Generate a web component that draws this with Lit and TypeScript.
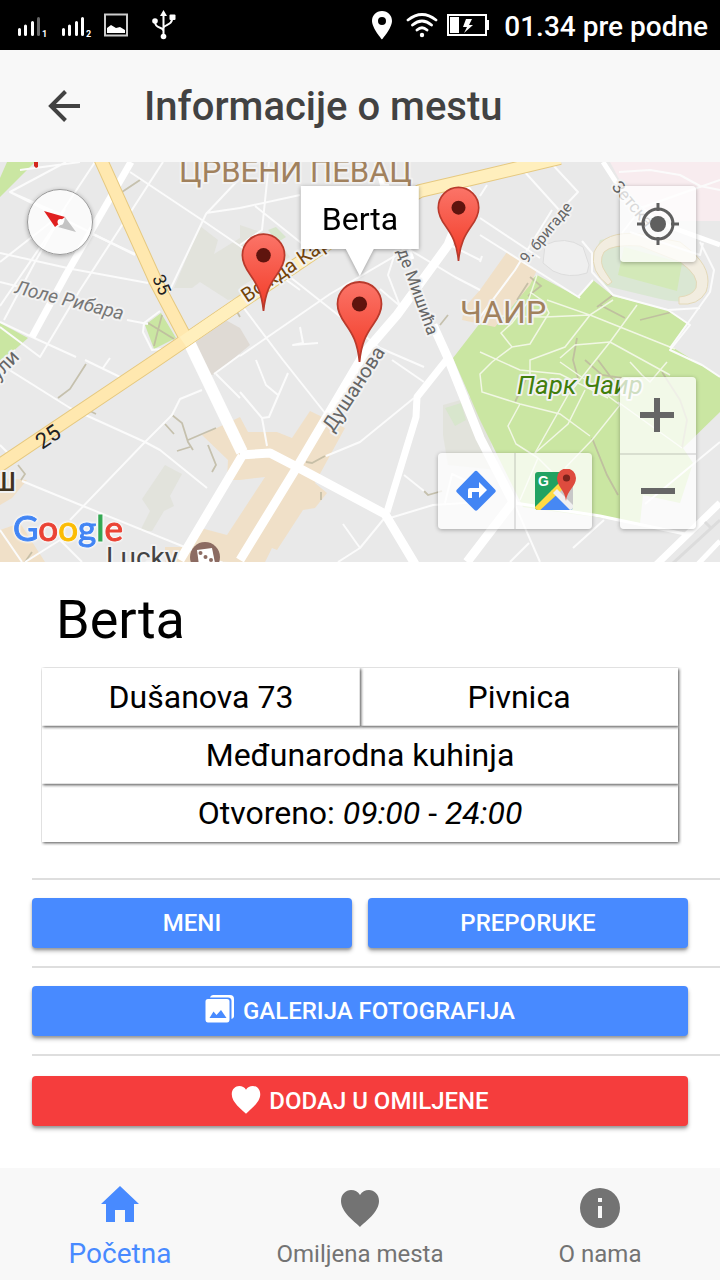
import { LitElement, html, css, svg } from "lit";
import { customElement, property } from "lit/decorators.js";

@customElement("status-bar")
class StatusBar extends LitElement {
  static styles = css`
    :host {
      display: flex;
      align-items: center;
      justify-content: space-between;
      height: 50px;
      padding: 0 12px 0 16px;
      background: #000;
      color: #fff;
      font: 500 28px/32px Roboto, sans-serif;
    }
    .group {
      display: flex;
      align-items: center;
      gap: 14px;
    }
    svg {
      display: block;
    }
    .clock {
      padding-top: 4px;
    }
  `;

  render() {
    return html`
      <div class="group">
        <svg width="162" height="34" viewBox="16 8 162 34" fill="#fff">
          <g stroke="#fff" stroke-width="3" stroke-linecap="round">
            <path d="M19.5 29.500v5M25.500 26v8.500M32.500 22.500v12M63.500 29.500v5M69.500 26v8.500M76.500 22.500v12M82.500 18.500v16" />
            <path stroke="#666" d="M38.500 18.500v16" />
          </g>
          <text x="42" y="37" font-size="9" font-weight="700">1</text>
          <text x="86" y="37" font-size="9" font-weight="700">2</text>
          <path fill="none" stroke="#ccc" stroke-width="2" d="M105 14.500h22v21h-22z" />
          <path d="M107 33v-5l4-3 5 3 4-1 5 3v3z" />
          <g fill="none" stroke="#fff" stroke-width="2">
            <path d="M163.500 14v22M155 21c0 9 8 5 8.500 10M172 17c1 9-8 7-8.500 11" />
          </g>
          <path d="M160 16l3.500-6 3.500 6z" />
          <circle cx="155" cy="21" r="2.800" />
          <rect x="169.500" y="14.500" width="6" height="5.500" rx="1" />
          <circle cx="163.500" cy="36.500" r="2.800" />
        </svg>
      </div>
      <div class="group">
        <svg width="120" height="34" viewBox="370 8 120 34" fill="#fff">
          <path fill-rule="evenodd" d="M382 11c-6 0-10 4.500-10 10 0 7 10 18.500 10 18.500S392 28 392 21c0-5.500-4-10-10-10zm0 6a4 4 0 110 8 4 4 0 010-8z" />
          <g fill="none" stroke="#fff" stroke-width="2.800" stroke-linecap="round">
            <path d="M408 20q14-11 28 0M412.500 25q9.500-8 19 0M417 30q5-4.500 10 0" />
          </g>
          <circle cx="422" cy="35" r="2.200" />
          <path fill="none" stroke="#fff" stroke-width="2" d="M448 15h38v20h-38z" />
          <path d="M450 17h9v16h-9zM487 20h2v10h-2z" />
          <path d="M466 19h6l-3 6h4l-9 8 3-6h-4z" />
        </svg>
        <span class="clock">01.34 pre podne</span>
      </div>
    `;
  }
}

const thinRoads = [
  "M10 192L135 255M163 162L80 290L40 357L0 327M80 162L20 170M66 162L10 192L60 214",
  "M95 162L60 215L0 262M88 232L135 254M0 253L72 269L148 283M0 282L20 287",
  "M65 209L35 262L4 320M60 218L0 306M0 322L32 337L76 357",
  "M130 172L202 220L240 246L300 290M240 178L206 214L168 294M206 213L240 208",
  "M127 320L148 324M160 311L144 323L143 332L152 350L180 347",
  "M0 364L70 408L145 442L160 450L207 488M15 350L0 362M85 360L120 377M103 368L110 358",
  "M70 520L145 442L172 415L180 399L202 390M214 374L240 355M216 374L240 398",
  "M0 445L8 453M22 481L83 506L192 550L240 570M60 540L82 562",
  "M60 540L25 562M0 530L22 562",
  "M240 208L300 195M269 162L262 230L240 245M255 206L310 250M290 277L380 348L424 367",
  "M240 356L330 294L400 253M240 303L283 360L325 413M240 392L262 418L267 446M256 360L266 385L278 395M288 373L269 417L262 418",
  "M300 327L303 343L293 345L318 343",
  "M396 250L388 275L400 306M380 289L400 306M410 250L455 277L480 290M480 260L452 246",
  "M392 360L424 382M326 456L360 442L414 398M404 475L424 491M343 524L360 548L338 562",
  "M387 515L360 548M390 518L433 505L465 503L480 500M445 503L452 474L480 487",
  "M523 170L560 211L578 192L552 164M552 210L515 270L480 317M480 218L540 258M480 235L580 298",
  "M480 196L487 185M480 262L482 256",
  "M582 241L592 253L592 272L613 295L668 310L700 308M578 297L593 280M668 310L690 325L670 350L702 365L720 377",
  "M670 348L710 292L714 270L700 242M703 243L700 255L630 232",
  "M619 172L650 170L680 175L700 186L720 190M635 210L680 194L720 180M622 233L636 215",
  "M573 548L604 520M515 505L540 562M529 543L510 562M645 504L720 442",
];

const parkPaths = [
  "M537 275L528 302L512 323L501 333L512 347L530 344L549 313L543 301L530 292",
  "M500 316L545 317L590 315L613 300M547 300L590 315L565 347L530 360L530 390",
  "M590 315L675 349M637 305L610 342L568 395L535 453M610 342L670 375",
  "M560 358L575 345L610 342M512 347L492 362L480 374L482 392L520 404L560 414L590 436",
  "M560 362L600 390L620 405L592 440L565 468M535 453L568 424L585 390M520 404L508 426L516 444L538 458",
  "M538 458L520 500M480 352L520 370L560 374L608 398M630 362L642 375L650 382L667 362",
  "M618 402L682 448M538 458L560 480",
];

const trails = [
  "M528 283L517 300M530 277L541 286L528 296M600 305L625 318M597 307L613 295M640 320L672 312M577 338L573 360L578 378M598 360L613 380M585 360L602 375L622 378",
  "M592 438L607 475L618 495M528 375L515 402M662 372L680 400L687 420L682 448",
  "M172 415L182 423L188 442L193 450M188 440L216 428M177 451L190 447M165 424L174 434M86 364L70 389L58 398M208 445L216 465L212 472M90 411L96 414",
  "M18 465L25 474L21 480M306 462L312 463L325 456M321 492v8M424 491L428 495L442 491M440 325L448 315M122 192L140 180M240 317L236 310M25 562L32 552",
  "M148 323L174 339M162 315L158 330L154 346",
];

const renderMapDrawing = () => svg`
  <rect x="0" y="162" width="720" height="400" fill="#e9e9e9" />
  <g fill="#e2e3dc">
    <path d="M200 226l18 14-4 14 26-16v60l-12 2-28-18-8 6-18 0zM165 465l17 9-12 22 4 10-10 5-12 20h-12l10-20-8-12z" />
    <path d="M240 225l35 12 15 20-50 30zM443 405l35-10 20 75-50-5-5-30z" />
  </g>
  <g fill="#dfdad4">
    <path d="M195 343L222 318L240 328L250 345L215 374L208 376z" />
  </g>
  <path fill="#f8ecef" d="M610 162h110v59h-44l-40-10z" />
  <g fill="#cae6a2">
    <path d="M7 162H35L0 197V178zM0 323L28 338L10 354L0 362zM145 325l16-12 15 25-22 11z" />
    <path d="M445 408l16-5 5 17-11 6zM268 230l8-3 10 10-8 5z" fill="#d8e6cd" />
    <path d="M537 275L578 297L593 280L613 296L668 310L687 323L672 347L693 360L720 377V412L683 448L693 463L680 503L643 495L640 523L523 507L480 420L453 358L480 323z" />
  </g>
  <g fill="#f0e0c8">
    <path d="M507 252L537 270L530 285L495 327L462 320L464 308L480 290z" />
    <path d="M310 411L345 428L315 483L327 493L315 508L303 510L277 550L272 548L265 562H230L187 560L197 527L227 535L265 477L240 480L227 480L228 460L202 435L240 417L248 432L277 432L292 438z" />
    <path d="M0 478L27 480L12 498L0 505zM0 530L20 523L45 562H0zM165 547L195 547L210 562H165z" />
  </g>
  <g stroke="#d5d2cc" stroke-width="1">
    <path fill="#efefef" d="M545 245q20-10 38 2l6 18-2 8q-18 6-34-2l-10-8z" stroke="#ddd" />
    <path fill="#dae7d3" stroke="none" d="M600 240q45-12 90 20 20 20 12 36-15 10-46 2l-50-12q-16-24-6-46z" />
    <path fill="#f2ede0" stroke="#e4d9b8" d="M640 234Q604 230 594 252Q590 272 608 285L612 282L606 273Q598 262 604 252Q612 244 640 246L680 262Q700 276 696 288Q692 296 679 297V304Q698 306 706 292Q714 270 690 250L680 242z" />
    <path fill="#d3e9b8" stroke="none" d="M624 247l58 16-5 28-59-16z" />
  </g>
  <g fill="none" stroke="#bdb79f" stroke-width="1.800" opacity=".8">
    ${trails.map((d) => svg`<path d=${d} />`)}
  </g>
  <g fill="none" stroke="#f1f7e4" stroke-width="1.500">
    ${parkPaths.map((d) => svg`<path d=${d} />`)}
  </g>
  <g fill="none" stroke="#fbfbfb" stroke-width="2" stroke-linejoin="round">
    ${thinRoads.map((d) => svg`<path d=${d} />`)}
  </g>
  <g fill="none" stroke="#fff" stroke-linejoin="round">
    <path stroke-width="7" d="M131 162L67 273L32 337" />
    <path stroke-width="9" d="M378 162L386 190L410 260M433 325L448 358L480 438L513 502L467 562" />
    <path stroke-width="5" d="M460 175L475 200M603 162L625 196L657 222L720 245" />
    <path stroke-width="3" d="M515 503L600 516L685 534" />
    <path stroke-width="12" d="M188 340L242 452" />
    <path stroke-width="9" d="M240 455L270 453L297 467L385 514L415 564M297 467L240 560M297 467L365 352L397 315L448 245L458 220M242 456L180 560" />
    <path stroke-width="7" d="M448 358L417 397L416 417L387 512M655 566L720 503" />
    <path stroke-width="5" d="M698 564L720 541" />
    <path stroke="#dcdcdc" stroke-width="3" d="M672 564L720 520M705 522l7 7" />
  </g>
  <g fill="none" stroke-linejoin="round">
    <path stroke="#e6c980" stroke-width="14" d="M-6 469L155 361L240 303L330 242L420 191L480 177L560 158M100 158L156 282L184 335" />
    <path stroke="#ffe8af" stroke-width="12" d="M-6 469L155 361L240 303M100 158L156 282L184 335" />
    <path stroke="#ffefbd" stroke-width="12" d="M183 342L240 303L330 242L420 191L480 177L560 158" />
  </g>
  <path fill="#d3261c" d="M34 162h4v5l-2 1-2-2z" />
  <g class="halo">
    <text x="179" y="182" font-size="31" fill="#a1815d">ЦРВЕНИ ПЕВАЦ</text>
    <text x="460" y="323" font-size="32" fill="#a1815d">ЧАИР</text>
    <text x="517" y="394" font-size="26" font-style="italic" fill="#417e0b">Парк Чаир</text>
    <text transform="translate(14 293) rotate(14)" font-size="19" font-style="italic" fill="#777">Лоле Рибара</text>
    <text transform="translate(-2 381) rotate(-46)" font-size="20" fill="#666">ули</text>
    <text transform="translate(333 433) rotate(-57)" font-size="20" fill="#666">Душанова</text>
    <text transform="translate(247 303) rotate(-34)" font-size="20" fill="#74450b">Вожда Кар</text>
    <text transform="translate(397 251) rotate(70)" font-size="17" fill="#666">де Мишића</text>
    <text transform="translate(527 264) rotate(-51)" font-size="15" fill="#666">9. бригаде</text>
    <text transform="translate(611 187) rotate(50)" font-size="17" fill="#666">Зетска</text>
    <text x="-8" y="491" font-size="25" font-weight="500" fill="#40331f">Ш</text>
    <text x="106" y="567" font-size="28" fill="#444">Lucky</text>
  </g>
  <text transform="translate(152 278) rotate(66)" font-size="18" fill="#222">35</text>
  <text transform="translate(42 450) rotate(-34)" font-size="22" fill="#222">25</text>
  <circle cx="205" cy="557" r="15" fill="#8c6b62" />
  <path d="M197 550l15-2 3 15-16 2z" fill="#fff" />
  <g fill="#8c6b62">
    <circle cx="200.500" cy="553" r="2" /><circle cx="205.500" cy="557" r="2" /><circle cx="211" cy="560" r="2" />
  </g>
  <text class="brand outline" x="13" y="541" font-size="35" aria-hidden="true">
    <tspan fill="#4285f4" stroke="#4285f4">G</tspan><tspan fill="#ea4335" stroke="#ea4335">o</tspan><tspan fill="#fbbc05" stroke="#fbbc05">o</tspan><tspan fill="#4285f4" stroke="#4285f4">g</tspan><tspan fill="#34a853" stroke="#34a853">l</tspan><tspan fill="#ea4335" stroke="#ea4335">e</tspan>
  </text>
`;

const pin = (x: number, y: number, scale: number) => svg`
  <g transform="translate(${x} ${y}) scale(${scale})">
    <path d="M0 0C-2-20-7-28-14-38-19-45-22-51-22-58A22 22 0 0122-58C22-51 19-45 14-38 7-28 2-20 0 0z"
      fill="url(#pin)" stroke="#b93a2c" stroke-width="1.800" />
    <circle cy="-58" r="7.600" fill="#5f140e" />
  </g>`;

@customElement("place-map")
class PlaceMap extends LitElement {
  @property() place = "";

  static styles = css`
    :host {
      display: block;
      position: relative;
      height: 400px;
      overflow: hidden;
      font-family: Roboto, sans-serif;
    }
    .canvas {
      display: block;
      width: 100%;
      height: 100%;
    }
    .halo text {
      paint-order: stroke;
      stroke: #f2f2f2;
      stroke-width: 4px;
      stroke-linejoin: round;
    }
    .brand {
      font-family: Lato, sans-serif;
      stroke-width: 1px;
      filter: drop-shadow(0 0 1px #fff) drop-shadow(0 0 1px #fff);
    }
    button {
      display: grid;
      place-items: center;
      width: 76px;
      height: 76px;
      padding: 0;
      border: 0;
      background: transparent;
    }
    .control {
      position: absolute;
      display: flex;
      border-radius: 4px;
      background: rgba(255, 255, 255, 0.75);
      box-shadow: 0 1px 4px rgba(0, 0, 0, 0.3);
    }
    .compass {
      top: 27px;
      left: 27px;
      border-radius: 50%;
      border: 1px solid #999;
    }
    .compass button {
      width: 64px;
      height: 64px;
    }
    .locate {
      top: 24px;
      right: 24px;
    }
    .zoom {
      right: 24px;
      bottom: 33px;
      flex-direction: column;
    }
    .zoom button + button {
      border-top: 2px solid rgba(0, 0, 0, 0.1);
    }
    .links {
      right: 128px;
      bottom: 33px;
    }
    .links button + button {
      width: 78px;
      border-left: 2px solid rgba(0, 0, 0, 0.1);
    }
    .bubble {
      position: absolute;
      top: 24px;
      left: 50%;
      transform: translateX(-50%);
      padding: 15px 21px 12px;
      background: #fff;
      font-size: 32px;
      line-height: 36px;
      filter: drop-shadow(0 1px 2px rgba(0, 0, 0, 0.35));
    }
    .bubble::after {
      content: "";
      position: absolute;
      top: 100%;
      left: 50%;
      transform: translateX(-50%);
      border: 14px solid transparent;
      border-top: 27px solid #fff;
      border-bottom: 0;
    }
  `;

  render() {
    return html`
      <svg class="canvas" viewBox="0 162 720 400" preserveAspectRatio="xMidYMid slice">
        <defs>
          <linearGradient id="pin" x1="0" y1="0" x2="0" y2="1">
            <stop offset="0" stop-color="#fb7468" />
            <stop offset="1" stop-color="#f23a26" />
          </linearGradient>
        </defs>
        ${renderMapDrawing()}
        ${pin(263.5, 311, 0.96)} ${pin(458.5, 261, 0.92)} ${pin(359.5, 362, 1)}
      </svg>
      <div class="bubble">${this.place}</div>
      <div class="control compass">
        <button aria-label="Sever">
          <svg width="64" height="64" viewBox="28 190 64 64">
            <path fill="#e02020" d="M44 211l21 6-4 3-1 3-5 4z" />
            <path fill="#c4c4c4" d="M76 232l-11-15-1 5-6 5z" />
            <circle cx="60.500" cy="222" r="3" fill="#fff" />
          </svg>
        </button>
      </div>
      <div class="control locate">
        <button aria-label="Moja lokacija">
          <svg width="42" height="42" viewBox="0 0 42 42" fill="none" stroke="#5f5f5f">
            <circle cx="21" cy="21" r="15" stroke-width="3" />
            <circle cx="21" cy="21" r="8" fill="#5f5f5f" stroke="none" />
            <path stroke-width="3" d="M21 0v8M21 34v8M0 21h8M34 21h8" />
          </svg>
        </button>
      </div>
      <div class="control zoom">
        <button aria-label="Uvećaj">
          <svg width="36" height="34" viewBox="1 0 36 34" fill="#666"><path d="M15 0h6v14h14v6H21v14h-6V20H1v-6h14z" /></svg>
        </button>
        <button aria-label="Umanji">
          <svg width="34" height="34" viewBox="0 0 34 34" fill="#666"><path d="M0 13h34v6H0z" /></svg>
        </button>
      </div>
      <div class="control links">
        <button aria-label="Uputstvo za put">
          <svg width="42" height="42" viewBox="0 0 42 42">
            <path fill="#4285f4" d="M19.500 1.500q1.500-1.500 3 0L40 19.500q1.500 1.500 0 3L22.500 40q-1.500 1.500-3 0L2 22.500q-1.500-1.500 0-3z" />
            <path fill="#fff" d="M13 28V20q0-2 2-2h9v-6l8 8-8 8v-6h-7v6z" />
          </svg>
        </button>
        <button aria-label="Otvori mapu">
          <svg width="44" height="44" viewBox="532 469 44 44">
            <clipPath id="tile"><rect x="535" y="472" width="38" height="38" rx="3" /></clipPath>
            <g clip-path="url(#tile)">
              <path fill="#21a261" d="M535 472h38v38h-38z" />
              <path fill="#c8c8c8" d="M573 480v30L551 491z" />
              <path fill="#4688f4" d="M554 491l22 21h-42z" />
              <path fill="#ffdb43" d="M533 509l26-26 5 5-27 25z" />
              <path fill="#f0f0f0" d="M553 493l4-4 18 18-4 4z" />
            </g>
            <text x="538" y="486" font-size="14" font-weight="700" fill="#fff">G</text>
            <path fill="#de4b3e" d="M566 501c-1-11-9-14-9-23a9.500 9.500 0 0119 0c0 9-9 12-10 23z" />
            <circle cx="566.500" cy="478" r="3.600" fill="#7b231c" />
          </svg>
        </button>
      </div>
    `;
  }
}

@customElement("app-root")
class AppRoot extends LitElement {
  static styles = css`
    :host {
      display: flex;
      flex-direction: column;
      min-height: 100vh;
      background: #fff;
      color: #000;
      font-family: Roboto, sans-serif;
    }
    svg {
      display: block;
    }
    .toolbar {
      display: flex;
      align-items: center;
      gap: 64px;
      height: 112px;
      padding: 0 48px;
      background: #f8f8f8;
      color: #424242;
    }
    .toolbar h1 {
      margin: 0;
      padding-top: 2px;
      font-size: 40px;
      line-height: 48px;
      font-weight: 500;
    }
    .toolbar button {
      padding: 0;
      border: 0;
      background: none;
      color: inherit;
    }
    main {
      flex: 1;
    }
    h2 {
      margin: 0;
      padding: 27px 56px 17px;
      font-size: 54px;
      line-height: 62px;
      font-weight: 400;
    }
    .facts {
      display: grid;
      grid-template-columns: 1fr 1fr;
      margin: 0 42px 36px;
      font-size: 32px;
      line-height: 38px;
      text-align: center;
    }
    .fact {
      padding: 10px;
      box-shadow: 1px 1px 3px rgba(0, 0, 0, 0.7);
      clip-path: inset(-1px -4px -4px -1px);
    }
    .wide {
      grid-column: 1 / -1;
    }
    .actions {
      display: flex;
      gap: 16px;
      margin-left: 32px;
      padding: 18px 32px 18px 0;
      border-top: 2px solid #dedede;
    }
    .actions.last {
      padding-top: 20px;
    }
    .action {
      flex: 1;
      display: flex;
      align-items: center;
      justify-content: center;
      gap: 8px;
      height: 50px;
      padding: 0;
      border: 0;
      border-radius: 4px;
      background: #488aff;
      color: #fff;
      font: 500 24px/28px Roboto, sans-serif;
      text-transform: uppercase;
      box-shadow: 0 3px 4px rgba(0, 0, 0, 0.3), 0 2px 2px rgba(0, 0, 0, 0.15);
    }
    .favorite {
      background: #f53d3d;
    }
    nav {
      display: grid;
      grid-template-columns: repeat(3, 1fr);
      height: 112px;
      background: #f8f8f8;
    }
    .tab {
      display: flex;
      flex-direction: column;
      align-items: center;
      justify-content: flex-end;
      gap: 10px;
      padding-bottom: 12px;
      color: #737373;
      font-size: 24px;
      line-height: 28px;
      text-decoration: none;
    }
    .active {
      gap: 18px;
      color: #488aff;
      font-size: 28px;
    }
  `;

  render() {
    return html`
      <status-bar></status-bar>
      <header class="toolbar">
        <button aria-label="Nazad">
          <svg width="32" height="32" viewBox="0 0 32 32" fill="none" stroke="currentColor" stroke-width="4">
            <path d="M32 16H3M17.500 1.500L3 16l14.500 14.500" />
          </svg>
        </button>
        <h1>Informacije o mestu</h1>
      </header>
      <main>
        <place-map place="Berta"></place-map>
        <h2>Berta</h2>
        <div class="facts">
          <div class="fact">Dušanova 73</div>
          <div class="fact">Pivnica</div>
          <div class="fact wide">Međunarodna kuhinja</div>
          <div class="fact wide">Otvoreno: <em>09:00</em> - <em>24:00</em></div>
        </div>
        <div class="actions">
          <button class="action">Meni</button>
          <button class="action">Preporuke</button>
        </div>
        <div class="actions">
          <button class="action">
            <svg width="30" height="34" viewBox="0 0 30 34" fill="#fff">
              <path d="M5 3.500Q5.500 1 8 1h17q4 0 4 4v17q0 2.500-2.500 3V7q0-3.500-3.500-3.500z" />
              <path fill-rule="evenodd" d="M3 5h19q2.500 0 2.500 2.500v18q0 3-2.500 3H3q-2.500 0-2.500-3v-18Q.5 5 3 5zm1.500 19h17l-5.500-8-4.500 5-3-3.500z" />
            </svg>
            Galerija fotografija
          </button>
        </div>
        <div class="actions last">
          <button class="action favorite">
            <svg width="30" height="32" viewBox="0 -1 40 42" fill="#fff">
              <path d="M20 37C14 31 1 22 1 11 1 4 6 0 11 0q6 0 9 5 3-5 9-5c5 0 10 4 10 11 0 11-13 20-19 26z" />
            </svg>
            Dodaj u omiljene
          </button>
        </div>
      </main>
      <nav>
        <a class="tab active" href="#pocetna">
          <svg width="38" height="36" viewBox="0 0 38 36" fill="currentColor"><path d="M19 0l19 18h-5v18h-9V24H14v12H5V18H0z" /></svg>
          Početna
        </a>
        <a class="tab" href="#omiljena">
          <svg width="40" height="42" viewBox="0 -2 40 42" fill="currentColor">
            <path d="M20 37C14 31 1 22 1 11 1 4 6 0 11 0q6 0 9 5 3-5 9-5c5 0 10 4 10 11 0 11-13 20-19 26z" />
          </svg>
          Omiljena mesta
        </a>
        <a class="tab" href="#onama">
          <svg width="40" height="44" viewBox="0 0 40 44" fill="currentColor">
            <path fill-rule="evenodd" d="M20 2a20 20 0 110 40 20 20 0 010-40zm-2 18v12h4V20zm0-8v4h4v-4z" />
          </svg>
          O nama
        </a>
      </nav>
    `;
  }
}
